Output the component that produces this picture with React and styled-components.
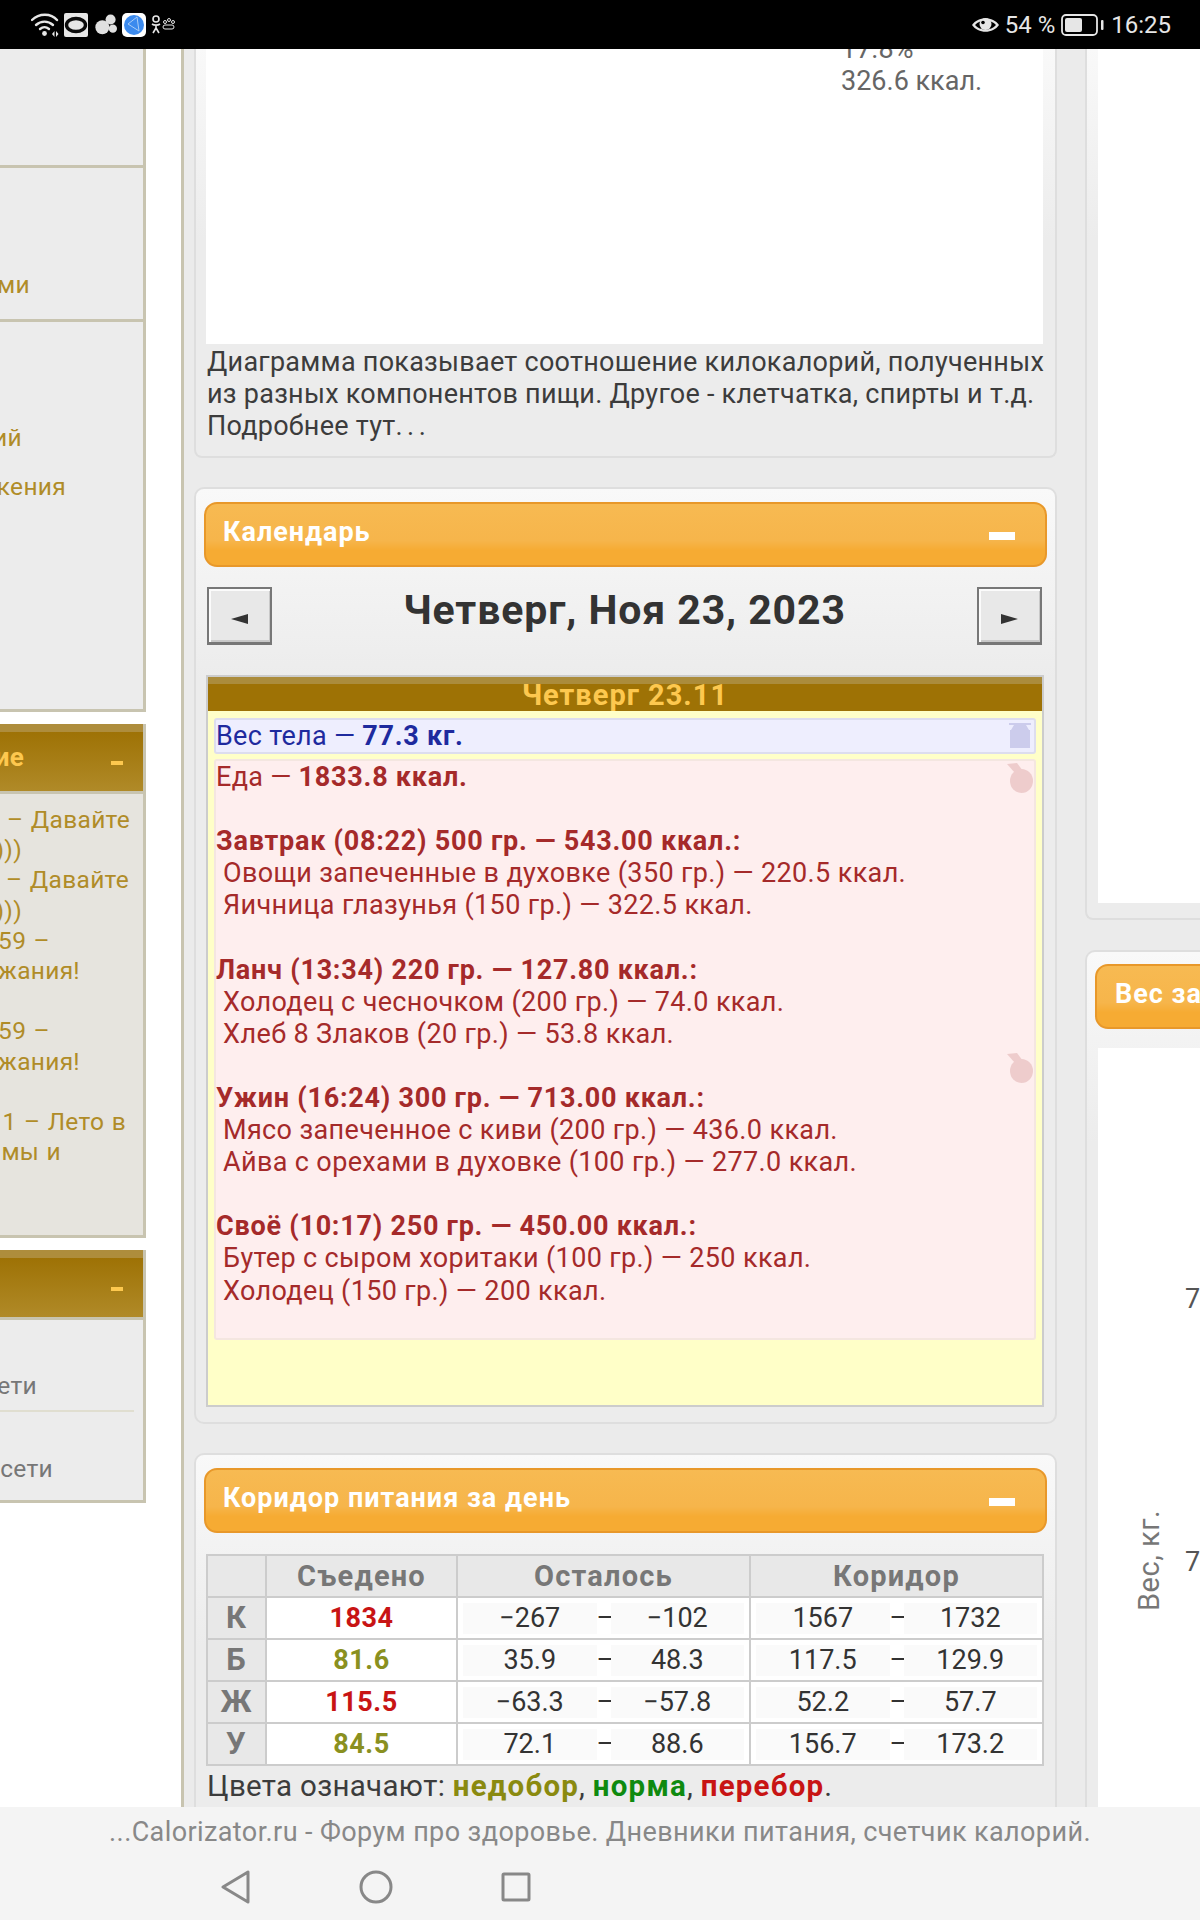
import styled, { createGlobalStyle } from "styled-components";

const GlobalStyle = createGlobalStyle`
  html, body {
    margin: 0;
    padding: 0;
    background: #fff;
    font-family: Roboto, "Liberation Sans", sans-serif;
  }
  b {
    letter-spacing: 0.75px;
  }
`;

const Screen = styled.div`
  width: 1200px;
  height: 1920px;
  display: flex;
  flex-direction: column;
  overflow: hidden;
`;

const StatusBar = styled.div`
  height: 49px;
  flex-shrink: 0;
  background: #000;
  color: #e6e6e6;
  display: flex;
  align-items: center;
  justify-content: space-between;
  padding: 0 29px 0 31px;
  font-size: 24px;
  position: relative;
  z-index: 2;
`;

const StatusGroup = styled.div`
  display: flex;
  align-items: center;
  gap: ${(p) => p.$gap || 5}px;
`;

const Page = styled.div`
  flex: 1;
  min-height: 0;
  display: flex;
  overflow: hidden;
  background: #fff;
`;

const Sidebar = styled.div`
  width: 146px;
  flex-shrink: 0;
  overflow: hidden;
  font-size: 24.5px;
  letter-spacing: 0.3px;
  word-spacing: 1px;
  color: #b08c28;
`;

const SideMenu = styled.div`
  background: #ececec;
  border-right: 3px solid #c8c4b0;
  border-bottom: 3px solid #c8c4b0;
`;

const MenuRow = styled.div`
  height: ${(p) => p.$height}px;
  padding-top: ${(p) => p.$top || 0}px;
  box-sizing: border-box;
  border-bottom: ${(p) => (p.$last ? "none" : "3px solid #c8c4b0")};
`;

const SideHead = styled.div`
  margin-top: 12px;
  height: 70px;
  box-sizing: border-box;
  border-right: 3px solid #c8c4b0;
  border-bottom: 3px solid #c8c4b0;
  background: linear-gradient(#ae8d3c 0 8px, #9e7205 8px, #b08a28 100%);
  color: #fdc84f;
  font-weight: 700;
  font-size: 26px;
  position: relative;
`;

const SideMinus = styled.i`
  position: absolute;
  left: 111px;
  top: 37px;
  width: 12px;
  height: 4px;
  background: #fdc84f;
`;

const SideBody = styled.div`
  height: ${(p) => p.$height}px;
  box-sizing: border-box;
  padding-top: ${(p) => p.$top || 0}px;
  background: ${(p) => p.$bg};
  border-right: 3px solid #c8c4b0;
  border-bottom: 3px solid #c8c4b0;
  color: ${(p) => p.$color || "#b08c28"};
`;

/* the left of these lines is scrolled out of the window, so they hang from their right edge */
const SideLine = styled.div`
  width: ${(p) => p.$end}px;
  display: flex;
  justify-content: flex-end;
  white-space: nowrap;
  line-height: ${(p) => p.$line || 30.2}px;
  margin-top: ${(p) => p.$top || 0}px;
`;

const SideRule = styled.div`
  width: 134px;
  height: 2px;
  background: #e0ded0;
  margin: 8px 0 41px;
`;

const Content = styled.div`
  flex: 1;
  margin-left: 35px;
  display: flex;
  gap: 28px;
  padding-left: 10px;
  background: #ebebeb;
  border-left: 3px solid #c8c4b0;
  overflow: hidden;
`;

const MainColumn = styled.div`
  width: 863px;
  flex-shrink: 0;
  display: flex;
  flex-direction: column;
  gap: 29px;
  font-size: 27px;
  line-height: 32px;
  letter-spacing: 0.3px;
  color: #3c3c3c;
`;

const Card = styled.div`
  box-sizing: border-box;
  border: 2px solid #dedede;
  border-top-width: ${(p) => (p.$cut ? 0 : 2)}px;
  border-radius: ${(p) => (p.$cut ? "0 0 8px 8px" : "10px")};
  background: linear-gradient(#f9f9f9, #ececec 190px);
  padding: ${(p) => p.$padding || "13px 8px 0"};
  flex-shrink: 0;
`;

const ChartArea = styled.div`
  height: 295px;
  background: #fff;
  overflow: hidden;
  margin-bottom: 2px;
  padding-left: 635px;
  color: #666;
  letter-spacing: 0;
`;

const ChartLegend = styled.div`
  margin-top: -16px;
`;

const ChartNote = styled.div`
  padding-left: 1px;
  white-space: nowrap;
  letter-spacing: 0.26px;
`;

const Dots = styled.span`
  letter-spacing: 4.5px;
`;

const Header = styled.div`
  height: 65px;
  box-sizing: border-box;
  border: 2px solid #e8982a;
  border-radius: 13px;
  background: linear-gradient(#f7ba52, #f6b54b 60%, #f6ab33 76%);
  color: #fff;
  font-weight: 700;
  font-size: 27px;
  letter-spacing: 1px;
  display: flex;
  align-items: center;
  justify-content: space-between;
  padding: 0 30px 6px 17px;
`;

const HeaderMinus = styled.i`
  width: 26px;
  height: 8px;
  background: #fff;
  margin-top: 8px;
`;

const DateRow = styled.div`
  display: flex;
  padding: 20px 5px 30px 3px;
`;

const DateTitle = styled.div`
  flex: 1;
  text-align: center;
  font-size: 41px;
  line-height: 46px;
  font-weight: 700;
  letter-spacing: 0.9px;
  color: #333;
`;

const NavButton = styled.div`
  width: 65px;
  height: 58px;
  box-sizing: border-box;
  background: #e8e8e8;
  border: 2px solid #777;
  border-bottom-width: 3px;
  box-shadow: inset 2px 2px #fbfbfb, inset -1px -2px #c8c8c8;
  display: flex;
  align-items: center;
  justify-content: center;
  padding-top: 6px;
`;

const DayBox = styled.div`
  border: 2px solid #ccc;
  margin-left: 2px;
  margin-right: 3px;
`;

const DayHead = styled.div`
  height: 34px;
  background: linear-gradient(#ab8c3c 0 7px, #9e7205 7px);
  color: #fdc84f;
  text-align: center;
  font-weight: 700;
  font-size: 29px;
  letter-spacing: 1px;
  line-height: 36px;
`;

const DayBody = styled.div`
  height: 694px;
  box-sizing: border-box;
  padding: 7px 6px 0;
  background: #ffffc8;
`;

const WeightRow = styled.div`
  position: relative;
  height: 36px;
  box-sizing: border-box;
  border: 2px solid #ddddee;
  border-radius: 3px;
  background: #eeeefe;
  color: #1e2a9e;
`;

const FoodBox = styled.div`
  position: relative;
  height: 581px;
  box-sizing: border-box;
  margin-top: 5px;
  border: 2px solid #f4e6e0;
  border-radius: 3px;
  background: #feeeee;
  color: #a52a2a;
  line-height: 32.1px;
`;

const Meal = styled.div`
  margin-top: 32.1px;
`;

const MealItem = styled.div`
  padding-left: 7px;
  letter-spacing: 0.36px;
`;

const Mark = styled.svg`
  position: absolute;
  right: ${(p) => p.$right}px;
  top: ${(p) => p.$top}px;
`;

const CardSpacer = styled.div`
  height: 15px;
`;

const Grid = styled.table`
  width: 836px;
  margin: 21px 0 0 2px;
  border-collapse: collapse;
  table-layout: fixed;
  background: #fff;
  letter-spacing: 0;
`;

const HeadCell = styled.th`
  box-sizing: border-box;
  height: 42px;
  padding: 0;
  border: 2px solid #ccc;
  background: #e8e8e8;
  color: #777;
  font-size: ${(p) => p.$size || 29}px;
  line-height: 34px;
  letter-spacing: 1.2px;
  font-weight: 700;
  text-align: center;
`;

const ValueCell = styled.td`
  box-sizing: border-box;
  height: 42px;
  padding: 0;
  border: 2px solid #ccc;
  text-align: center;
  font-weight: 700;
  letter-spacing: 0.5px;
  color: ${(p) => p.$color};
`;

const RangeCell = styled.td`
  box-sizing: border-box;
  height: 42px;
  padding: 0 5px;
  border: 2px solid #ccc;
  color: #333;
`;

const Range = styled.div`
  display: flex;
  align-items: center;
`;

const RangeValue = styled.span`
  flex: 1;
  height: 31px;
  line-height: 31px;
  background: #fafafa;
  text-align: center;
`;

const RangeDash = styled.span`
  width: 14px;
  text-align: center;
`;

const Legend = styled.div`
  margin: 4px 0 0 3px;
  font-size: 29.5px;
  white-space: nowrap;
`;

const Tone = styled.b`
  color: ${(p) => p.$color};
  letter-spacing: 1.2px;
`;

const RightColumn = styled.div`
  flex: 1;
  min-width: 0;
  display: flex;
  flex-direction: column;
  gap: 30px;
`;

const RightCard = styled(Card)`
  border-right: 0;
  border-radius: ${(p) => (p.$cut ? "0 0 0 8px" : "10px 0 0 0")};
`;

const RightHeader = styled(Header)`
  margin-right: -40px;
  padding-left: 18px;
`;

const RightChart = styled.div`
  height: ${(p) => p.$height}px;
  background: #fff;
  margin: ${(p) => p.$margin};
`;

const BottomBar = styled.div`
  height: 113px;
  flex-shrink: 0;
  background: #f4f4f4;
  position: relative;
  z-index: 2;
  text-align: center;
  color: #888;
  font-size: 27px;
  letter-spacing: 0.4px;
  padding-top: 9px;
  box-sizing: border-box;
`;

const BarTitle = styled.div`
  line-height: 32px;
`;

const NavRow = styled.div`
  display: flex;
  align-items: center;
  margin-top: 22px;
  padding-left: 221px;
  gap: 108px;
`;

function Arrow({ left }) {
  return (
    <svg width="17" height="10" viewBox="0 0 17 10">
      <polygon points={left ? "0,5 17,0 17,10" : "0,0 17,5 0,10"} fill="#333" />
    </svg>
  );
}

function AppleMark({ top }) {
  return (
    <Mark $right={1} $top={top} width="26" height="30" viewBox="0 0 26 30" fill="#eecccc">
      <path d="M0 1l10-1 6 8-8 2z" />
      <ellipse cx="14.500" cy="18" rx="11.500" ry="12" />
    </Mark>
  );
}

const meals = [
  {
    title: "Завтрак (08:22) 500 гр. — 543.00 ккал.:",
    items: ["Овощи запеченные в духовке (350 гр.) — 220.5 ккал.", "Яичница глазунья (150 гр.) — 322.5 ккал."],
  },
  {
    title: "Ланч (13:34) 220 гр. — 127.80 ккал.:",
    items: ["Холодец с чесночком (200 гр.) — 74.0 ккал.", "Хлеб 8 Злаков (20 гр.) — 53.8 ккал."],
  },
  {
    title: "Ужин (16:24) 300 гр. — 713.00 ккал.:",
    items: ["Мясо запеченное с киви (200 гр.) — 436.0 ккал.", "Айва с орехами в духовке (100 гр.) — 277.0 ккал."],
  },
  {
    title: "Своё (10:17) 250 гр. — 450.00 ккал.:",
    items: ["Бутер с сыром хоритаки (100 гр.) — 250 ккал.", "Холодец (150 гр.) — 200 ккал."],
  },
];

const RED = "#c81414";
const OLIVE = "#8a9020";

const rows = [
  ["К", "1834", RED, "−267", "−102", "1567", "1732"],
  ["Б", "81.6", OLIVE, "35.9", "48.3", "117.5", "129.9"],
  ["Ж", "115.5", RED, "−63.3", "−57.8", "52.2", "57.7"],
  ["У", "84.5", OLIVE, "72.1", "88.6", "156.7", "173.2"],
];

function RangeBox({ from, to }) {
  return (
    <Range>
      <RangeValue>{from}</RangeValue>
      <RangeDash>–</RangeDash>
      <RangeValue>{to}</RangeValue>
    </Range>
  );
}

export default function App() {
  return (
    <>
      <GlobalStyle />
      <Screen>
        <StatusBar>
          <StatusGroup $gap={5}>
            <svg width="28" height="24" viewBox="0 0 28 24" fill="none" stroke="#e6e6e6" strokeLinecap="round">
              <path d="M1 7C8 0 20 0 26 7" strokeWidth="2.4" />
              <path d="M5 12c5-4.5 12-4.5 17 0" strokeWidth="2.4" />
              <path d="M9 16c3-2.5 6-2.5 9 0" strokeWidth="2.4" />
              <circle cx="13.5" cy="20.5" r="2.4" fill="#e6e6e6" stroke="none" />
              <path d="M21 21l2.5-3v6zM25 18v6l2.5-3z" fill="#e6e6e6" stroke="none" />
            </svg>
            <svg width="24" height="24" viewBox="0 0 24 24">
              <rect width="24" height="24" rx="2" fill="#e6e6e6" />
              <ellipse cx="12" cy="12" rx="9.5" ry="6.5" fill="none" stroke="#0a0a0a" strokeWidth="3.4" />
            </svg>
            <svg width="22" height="21" viewBox="0 0 24 22" fill="#e0e0e0" style={{ marginLeft: 2 }}>
              <circle cx="8" cy="14" r="7.6" />
              <circle cx="17" cy="5.5" r="5.5" />
              <circle cx="19.5" cy="15.5" r="4.5" />
            </svg>
            <svg width="24" height="24" viewBox="0 0 24 24">
              <rect width="24" height="24" rx="5" fill="#fff" />
              <circle cx="12" cy="12" r="10" fill="#3b8aee" />
              <path d="M15 4L6 11l11 7z" fill="none" stroke="#a9cdf7" strokeWidth="1" />
            </svg>
            <svg width="24" height="20" viewBox="0 0 24 20" fill="none" stroke="#e6e6e6" strokeWidth="1.6">
              <circle cx="5" cy="4" r="3" />
              <path d="M1 9c2 1.500 6 1.500 8 0M5 10v3M5 13l-3 5M5 13l3 5" />
              <circle cx="14" cy="7" r="1.500" strokeWidth="1" />
              <circle cx="18" cy="5" r="1.500" strokeWidth="1" />
              <circle cx="22" cy="7" r="1.500" strokeWidth="1" />
              <rect x="12" y="10" width="11" height="4" rx="2" strokeWidth="1" />
            </svg>
          </StatusGroup>
          <StatusGroup $gap={0}>
            <svg width="27" height="20" viewBox="0 0 27 20" style={{ marginRight: 1 }}>
              <path d="M0 10C6 1 21 1 27 10 21 19 6 19 0 10z" fill="#e6e6e6" />
              <path d="M3 10C8 4 19 4 24 10 19 16 8 16 3 10z" fill="#000" />
              <circle cx="13.500" cy="9" r="6" fill="#e6e6e6" />
              <circle cx="11" cy="7.500" r="1.800" fill="#000" />
            </svg>
            <span>54 %</span>
            <svg width="44" height="24" viewBox="0 0 44 24" style={{ margin: "0 1px 0 1px" }}>
              <rect x="1" y="2" width="35" height="20" rx="4" fill="none" stroke="#e6e6e6" strokeWidth="1.800" />
              <rect x="4" y="5" width="17" height="14" rx="2" fill="#e6e6e6" />
              <rect x="40" y="7" width="2.500" height="10" rx="1" fill="#e6e6e6" />
            </svg>
            <span>16:25</span>
          </StatusGroup>
        </StatusBar>

        <Page>
          <Sidebar>
            <SideMenu>
              <MenuRow $height={119} />
              <MenuRow $height={154} $top={101}>
                <SideLine $end={30} $line={32}>ми</SideLine>
              </MenuRow>
              <MenuRow $height={387} $top={100} $last>
                <SideLine $end={22} $line={32}>ий</SideLine>
                <SideLine $end={66} $line={32} $top={17}>кения</SideLine>
              </MenuRow>
            </SideMenu>

            <SideHead>
              <SideLine $end={24} $line={66}>ие</SideLine>
              <SideMinus />
            </SideHead>
            <SideBody $height={444} $top={11} $bg="#e6e4de">
              <SideLine $end={130}>а – Давайте</SideLine>
              <SideLine $end={22}>)))</SideLine>
              <SideLine $end={129}>а – Давайте</SideLine>
              <SideLine $end={22}>)))</SideLine>
              <SideLine $end={50}>959 –</SideLine>
              <SideLine $end={80}>жания!</SideLine>
              <SideLine $end={50} $top={30.2}>959 –</SideLine>
              <SideLine $end={80}>жания!</SideLine>
              <SideLine $end={126} $top={30.2}>1 – Лето в</SideLine>
              <SideLine $end={61}>мы и</SideLine>
            </SideBody>

            <SideHead>
              <SideMinus />
            </SideHead>
            <SideBody $height={183} $top={50} $bg="#ececec" $color="#777">
              <SideLine $end={37} $line={32}>ети</SideLine>
              <SideRule />
              <SideLine $end={53} $line={32}>сети</SideLine>
            </SideBody>
          </Sidebar>

          <Content>
            <MainColumn>
              <Card $cut $padding="0 12px 14px 10px">
                <ChartArea>
                  <ChartLegend>
                    <div>17.8%</div>
                    <div>326.6 ккал.</div>
                  </ChartLegend>
                </ChartArea>
                <ChartNote>
                  Диаграмма показывает соотношение килокалорий, полученных
                  <br />
                  из разных компонентов пищи. Другое - клетчатка, спирты и т.д.
                  <br />
                  Подробнее тут<Dots>...</Dots>
                </ChartNote>
              </Card>

              <Card>
                <Header>
                  <span>Календарь</span>
                  <HeaderMinus />
                </Header>
                <DateRow>
                  <NavButton><Arrow left /></NavButton>
                  <DateTitle>Четверг, Ноя 23, 2023</DateTitle>
                  <NavButton><Arrow /></NavButton>
                </DateRow>
                <DayBox>
                  <DayHead>Четверг 23.11</DayHead>
                  <DayBody>
                    <WeightRow>
                      Вес тела — <b>77.3 кг.</b>
                      <Mark $right={3} $top={3} width="22" height="26" viewBox="0 0 22 26">
                        <path d="M0 0h22v2h-5l3 5h1v18H1V7h1l3-5H0z" fill="#ccccec" />
                      </Mark>
                    </WeightRow>
                    <FoodBox>
                      Еда — <b>1833.8 ккал.</b>
                      <AppleMark top={2} />
                      <AppleMark top={292} />
                      {meals.map((meal) => (
                        <Meal key={meal.title}>
                          <b>{meal.title}</b>
                          {meal.items.map((item) => (
                            <MealItem key={item}>{item}</MealItem>
                          ))}
                        </Meal>
                      ))}
                    </FoodBox>
                  </DayBody>
                </DayBox>
                <CardSpacer />
              </Card>

              <Card $padding="13px 8px 60px">
                <Header>
                  <span>Коридор питания за день</span>
                  <HeaderMinus />
                </Header>
                <Grid>
                  <colgroup>
                    <col width="59" />
                    <col width="191" />
                    <col width="293" />
                    <col width="293" />
                  </colgroup>
                  <thead>
                    <tr>
                      <HeadCell />
                      <HeadCell>Съедено</HeadCell>
                      <HeadCell>Осталось</HeadCell>
                      <HeadCell>Коридор</HeadCell>
                    </tr>
                  </thead>
                  <tbody>
                    {rows.map(([name, eaten, color, leftFrom, leftTo, rangeFrom, rangeTo]) => (
                      <tr key={name}>
                        <HeadCell as="td" $size={31}>{name}</HeadCell>
                        <ValueCell $color={color}>{eaten}</ValueCell>
                        <RangeCell><RangeBox from={leftFrom} to={leftTo} /></RangeCell>
                        <RangeCell><RangeBox from={rangeFrom} to={rangeTo} /></RangeCell>
                      </tr>
                    ))}
                  </tbody>
                </Grid>
                <Legend>
                  Цвета означают: <Tone $color="#8a8a10">недобор</Tone>, <Tone $color="#0f8a0f">норма</Tone>,{" "}
                  <Tone $color={RED}>перебор</Tone>.
                </Legend>
              </Card>
            </MainColumn>

            <RightColumn>
              <RightCard $cut $padding="0 0 15px 11px">
                <RightChart $height={854} $margin="0" />
              </RightCard>
              <RightCard $padding="12px 0 0 8px">
                <RightHeader>
                  <span>Вес за</span>
                </RightHeader>
                <RightChart $height={800} $margin="19px 0 0 3px">
                  <svg width="102" height="800" viewBox="0 0 102 800" fontFamily="Roboto, sans-serif" fontSize="27" fill="#777">
                    <text x="87" y="260" fill="#555">7</text>
                    <text x="87" y="523" fill="#555">7</text>
                    <text transform="translate(61 563) rotate(-90)" fontSize="29" letterSpacing="0.5">Вес, кг.</text>
                  </svg>
                </RightChart>
              </RightCard>
            </RightColumn>
          </Content>
        </Page>

        <BottomBar>
          <BarTitle>...Calorizator.ru - Форум про здоровье. Дневники питания, счетчик калорий.</BarTitle>
          <NavRow>
            <svg width="30" height="34" viewBox="0 0 30 34" fill="none" stroke="#888" strokeWidth="3" strokeLinejoin="round">
              <path d="M27 2v30L2 17z" />
            </svg>
            <svg width="34" height="34" viewBox="0 0 34 34" fill="none" stroke="#888" strokeWidth="3">
              <circle cx="17" cy="17" r="15" />
            </svg>
            <svg width="30" height="30" viewBox="0 0 30 30" fill="none" stroke="#888" strokeWidth="3">
              <rect x="2" y="2" width="26" height="26" rx="1" />
            </svg>
          </NavRow>
        </BottomBar>
      </Screen>
    </>
  );
}
